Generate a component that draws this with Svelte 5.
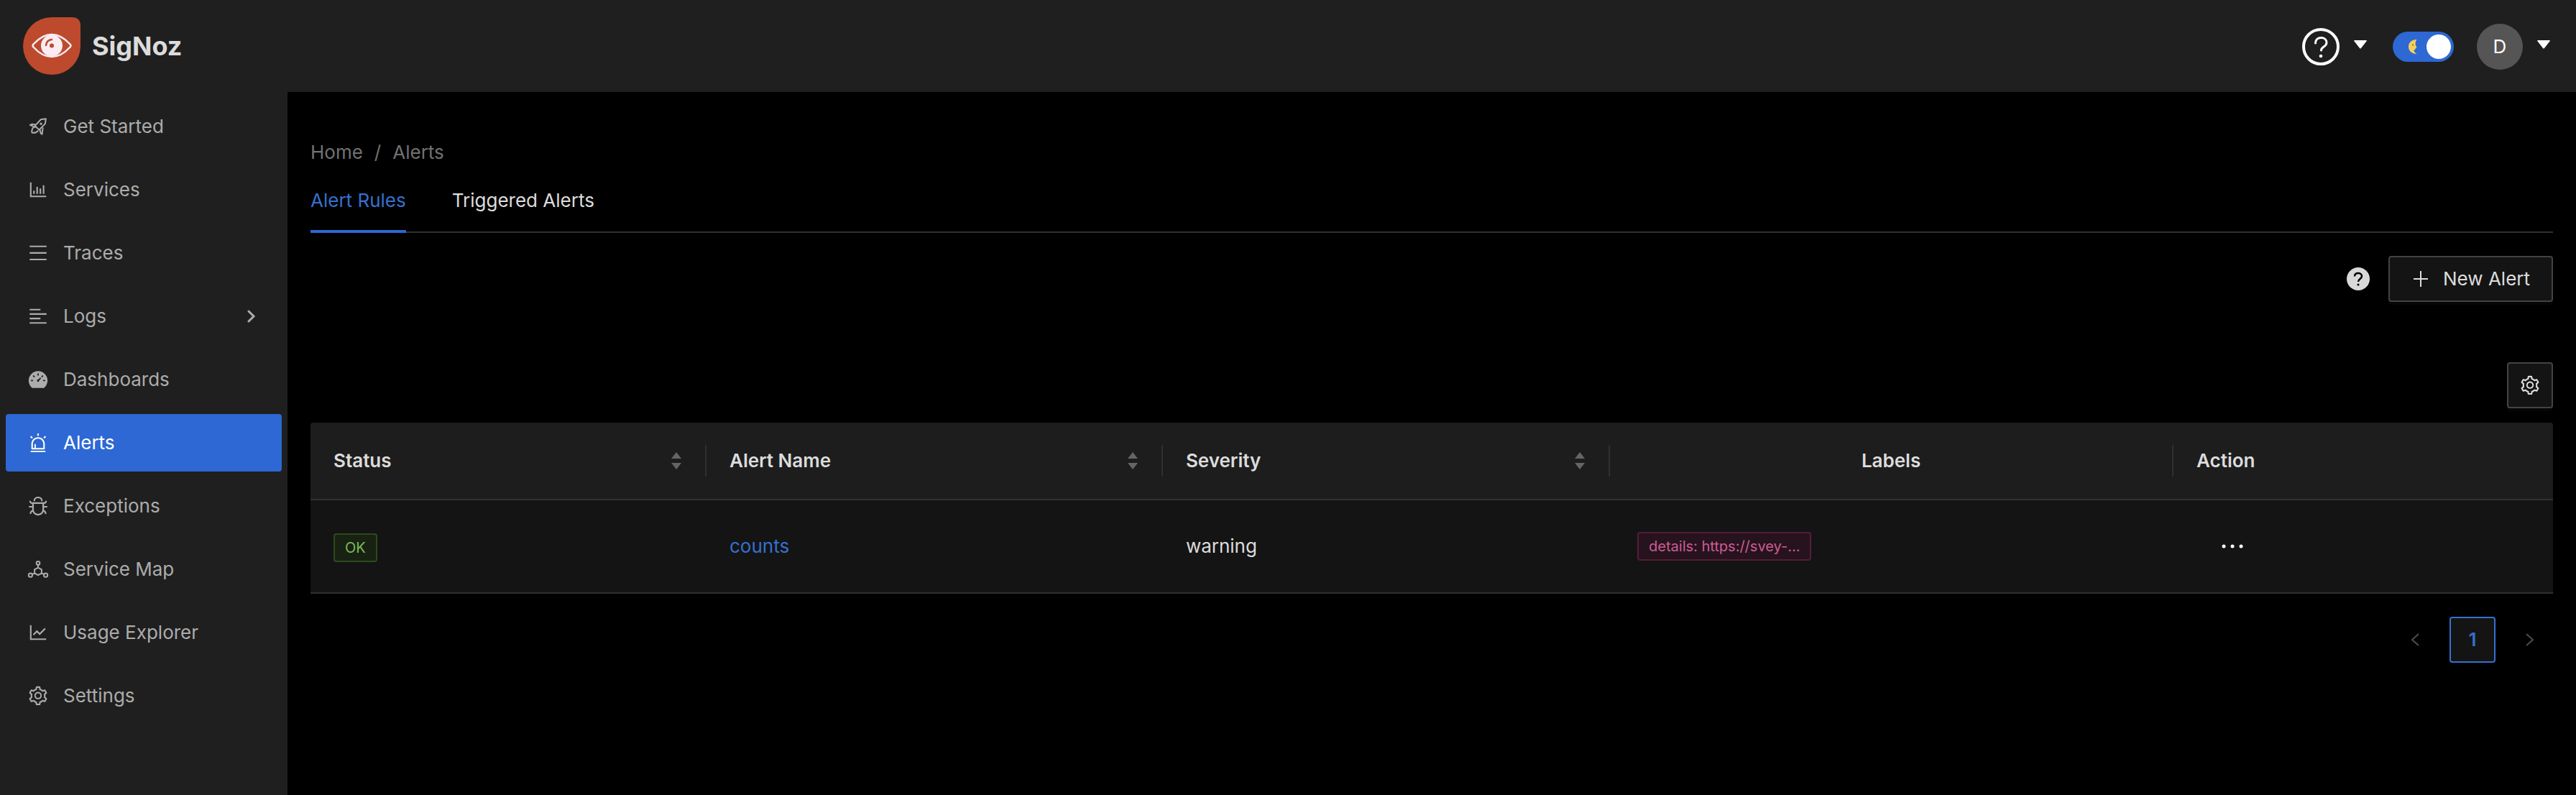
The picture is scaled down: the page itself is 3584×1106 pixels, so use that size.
<script>
  const setting = 'M924.8 625.7l-65.5-56c3.1-19 4.7-38.4 4.7-57.8s-1.6-38.8-4.7-57.8l65.5-56a32.03 32.03 0 009.3-35.2l-.9-2.6a443.74 443.74 0 00-79.7-137.9l-1.8-2.1a32.12 32.12 0 00-35.1-9.5l-81.3 28.9c-30-24.6-63.5-44-99.7-57.6l-15.7-85a32.05 32.05 0 00-25.8-25.7l-2.7-.5c-52.1-9.4-106.9-9.4-159 0l-2.7.5a32.05 32.05 0 00-25.8 25.7l-15.8 85.4a351.86 351.86 0 00-99 57.4l-81.9-29.1a32 32 0 00-35.1 9.5l-1.8 2.1a446.02 446.02 0 00-79.7 137.9l-.9 2.6c-4.5 12.5-.8 26.5 9.3 35.2l66.3 56.6c-3.1 18.8-4.6 38-4.6 57.1 0 19.2 1.5 38.4 4.6 57.1L99 625.5a32.03 32.03 0 00-9.3 35.2l.9 2.6c18.1 50.4 44.9 96.9 79.7 137.9l1.8 2.1a32.12 32.12 0 0035.1 9.5l81.9-29.1c29.8 24.5 63.1 43.9 99 57.4l15.8 85.4a32.05 32.05 0 0025.8 25.7l2.7.5a449.4 449.4 0 00159 0l2.7-.5a32.05 32.05 0 0025.8-25.7l15.7-85a350 350 0 0099.7-57.6l81.3 28.9a32 32 0 0035.1-9.5l1.8-2.1c34.8-41.1 61.6-87.5 79.7-137.9l.9-2.6c4.5-12.3.8-26.3-9.3-35zM788.3 465.9c2.5 15.1 3.8 30.6 3.8 46.1s-1.3 31-3.8 46.1l-6.6 40.1 74.7 63.9a370.03 370.03 0 01-42.6 73.6L721 702.8l-31.4 25.8c-23.9 19.6-50.5 35-79.3 45.8l-38.1 14.3-17.9 97a377.5 377.5 0 01-85 0l-17.9-97.2-37.8-14.5c-28.5-10.8-55-26.2-78.7-45.7l-31.4-25.9-93.4 33.2c-17-22.9-31.2-47.6-42.6-73.6l75.5-64.5-6.5-40c-2.4-14.9-3.7-30.3-3.7-45.5 0-15.3 1.2-30.6 3.7-45.5l6.5-40-75.5-64.5c11.3-26.1 25.6-50.7 42.6-73.6l93.4 33.2 31.4-25.9c23.7-19.5 50.2-34.9 78.7-45.7l37.9-14.3 17.9-97.2c28.1-3.2 56.8-3.2 85 0l17.9 97 38.1 14.3c28.7 10.8 55.4 26.2 79.3 45.8l31.4 25.8 92.8-32.9c17 22.9 31.2 47.6 42.6 73.6L781.8 426l6.5 39.9zM512 326c-97.2 0-176 78.8-176 176s78.8 176 176 176 176-78.8 176-176-78.8-176-176-176zm79.2 255.2A111.6 111.6 0 01512 614c-29.9 0-58-11.7-79.2-32.8A111.6 111.6 0 01400 502c0-29.9 11.7-58 32.8-79.2C454 401.6 482.1 390 512 390c29.9 0 58 11.6 79.2 32.8A111.6 111.6 0 01624 502c0 29.9-11.7 58-32.8 79.2z';
  const axes = 'M888 792H200V168c0-4.4-3.6-8-8-8h-56c-4.4 0-8 3.6-8 8v688c0 4.4 3.6 8 8 8h752c4.4 0 8-3.6 8-8v-56c0-4.4-3.6-8-8-8z';

  const items = [
    { label: 'Get Started', kind: 'rocket' },
    { label: 'Services', d: axes + 'M280 552h72v160h-72zM432 376h72v336h-72zM584 454h72v258h-72zM736 296h72v416h-72z' },
    { label: 'Traces', d: 'M112 160h800v72H112zM112 472h800v72H112zM112 784h800v72H112z' },
    { label: 'Logs', expand: true, d: 'M112 158h512v72H112zM112 370h800v72H112zM112 582h512v72H112zM112 794h800v72H112z' },
    { label: 'Dashboards', d: 'M924.8 385.6a446.7 446.7 0 00-96-142.4 446.7 446.7 0 00-142.4-96C631.1 123.8 572.5 112 512 112s-119.1 11.8-174.4 35.2a446.7 446.7 0 00-142.4 96 446.7 446.7 0 00-96 142.4C75.8 440.9 64 499.5 64 560c0 132.7 58.3 257.7 159.9 343.1l1.7 1.4c5.8 4.8 13.1 7.5 20.6 7.5h531.7c7.5 0 14.8-2.7 20.6-7.5l1.7-1.4C901.7 817.7 960 692.7 960 560c0-60.5-11.9-119.1-35.2-174.4zM482 232c0-4.4 3.6-8 8-8h44c4.4 0 8 3.6 8 8v80c0 4.4-3.6 8-8 8h-44c-4.4 0-8-3.6-8-8v-80zM270 582c0 4.4-3.6 8-8 8h-80c-4.4 0-8-3.6-8-8v-44c0-4.4 3.6-8 8-8h80c4.4 0 8 3.6 8 8v44zm90.7-204.5l-31.1 31.1a8.03 8.03 0 01-11.3 0L261.7 352a8.03 8.03 0 010-11.3l31.1-31.1c3.1-3.1 8.2-3.1 11.3 0l56.6 56.6c3.1 3.1 3.1 8.2 0 11.3zm291.1 83.6l-84.5 84.5c5 18.7.2 39.4-14.5 54.1a55.95 55.95 0 01-79.2 0 55.95 55.95 0 010-79.2 55.87 55.87 0 0154.1-14.5l84.5-84.5c3.1-3.1 8.2-3.1 11.3 0l28.3 28.3c3.1 3.1 3.1 8.1 0 11.3zm43-52.4l-31.1-31.1a8.03 8.03 0 010-11.3l56.6-56.6c3.1-3.1 8.2-3.1 11.3 0l31.1 31.1c3.1 3.1 3.1 8.2 0 11.3l-56.6 56.6a8.03 8.03 0 01-11.3 0zM846 582c0 4.4-3.6 8-8 8h-80c-4.4 0-8-3.6-8-8v-44c0-4.4 3.6-8 8-8h80c4.4 0 8 3.6 8 8v44z' },
    { label: 'Alerts', active: true, d: 'M193 796c0 17.7 14.3 32 32 32h574c17.7 0 32-14.3 32-32V563c0-176.2-142.8-319-319-319S193 386.8 193 563v233zm72-233c0-136.4 110.6-247 247-247s247 110.6 247 247v193H404V585c0-5.5-4.5-10-10-10h-44c-5.5 0-10 4.5-10 10v171h-75V563zm-48.1-252.5l39.6-39.6c3.1-3.1 3.1-8.2 0-11.3l-67.9-67.9a8.03 8.03 0 00-11.3 0l-39.6 39.6a8.03 8.03 0 000 11.3l67.9 67.9c3.1 3.1 8.1 3.1 11.3 0zm669.6-79.2l-39.6-39.6a8.03 8.03 0 00-11.3 0l-67.9 67.9a8.03 8.03 0 000 11.3l39.6 39.6c3.1 3.1 8.2 3.1 11.3 0l67.9-67.9c3.1-3.2 3.1-8.2 0-11.3zM832 892H192c-17.7 0-32 14.3-32 32v24c0 4.4 3.6 8 8 8h688c4.4 0 8-3.6 8-8v-24c0-17.7-14.3-32-32-32zM484 180h56c4.4 0 8-3.6 8-8V76c0-4.4-3.6-8-8-8h-56c-4.4 0-8 3.6-8 8v96c0 4.4 3.6 8 8 8z' },
    { label: 'Exceptions', d: 'M304 280h56c4.4 0 8-3.6 8-8 0-28.3 5.9-53.2 17.1-73.5 10.6-19.4 26-34.8 45.4-45.4C450.9 142 475.7 136 504 136h16c28.3 0 53.2 5.9 73.5 17.1 19.4 10.6 34.8 26 45.4 45.4C650 218.9 656 243.7 656 272c0 4.4 3.6 8 8 8h56c4.4 0 8-3.6 8-8 0-40-8.8-76.7-25.9-108.1a184.31 184.31 0 00-74-74C596.7 72.8 560 64 520 64h-16c-40 0-76.7 8.8-108.1 25.9a184.31 184.31 0 00-74 74C304.8 195.3 296 232 296 272c0 4.4 3.6 8 8 8zM940 512H792V412c76.8 0 139-62.2 139-139 0-4.4-3.6-8-8-8h-60c-4.4 0-8 3.6-8 8a63 63 0 01-63 63H232a63 63 0 01-63-63c0-4.4-3.6-8-8-8h-60c-4.4 0-8 3.6-8 8 0 76.8 62.2 139 139 139v100H84c-4.4 0-8 3.6-8 8v56c0 4.4 3.6 8 8 8h148v96c0 6.5.2 13 .7 19.3C164.1 728.6 116 796.7 116 876c0 4.4 3.6 8 8 8h56c4.4 0 8-3.6 8-8 0-44.2 23.9-82.9 59.6-103.7a273 273 0 0022.7 49c24.3 41.5 59 76.2 100.5 100.5S460.5 960 512 960s99.8-13.9 141.3-38.2a281.38 281.38 0 00123.2-149.5A120 120 0 01836 876c0 4.4 3.6 8 8 8h56c4.4 0 8-3.6 8-8 0-79.3-48.1-147.4-116.7-176.7.4-6.4.7-12.8.7-19.3v-96h148c4.4 0 8-3.6 8-8v-56c0-4.4-3.6-8-8-8zM716 680c0 36.8-9.7 72-27.8 102.9-17.7 30.3-43 55.6-73.3 73.3C584 874.3 548.8 884 512 884s-72-9.7-102.9-27.8c-30.3-17.7-55.6-43-73.3-73.3A202.75 202.75 0 01308 680V412h408v268z' },
    { label: 'Service Map', kind: 'map' },
    { label: 'Usage Explorer', d: axes + 'M305.8 637.7c3.1 3.1 8.1 3.1 11.3 0l138.3-137.6L583 628.5c3.1 3.1 8.2 3.1 11.3 0l275.4-275.3c3.1-3.1 3.1-8.2 0-11.3l-39.6-39.6a8.03 8.03 0 00-11.3 0l-230 229.9L461.4 404a8.03 8.03 0 00-11.3 0L266.3 586.7a8.03 8.03 0 000 11.3l39.5 39.7z' },
    { label: 'Settings', d: setting },
  ];

  let dark = $state(true);
</script>

{#snippet caret()}
  <svg class="caret" viewBox="0 0 18 12" aria-hidden="true"><path d="M1 0h16q1.500 0 .6 1.200L10 11q-1 1-2 0L.4 1.200Q-.5 0 1 0z" /></svg>
{/snippet}

{#snippet sorter()}
  <button class="sorter" aria-label="Sort">
    <svg viewBox="0 0 16 24" aria-hidden="true"><path d="M8 0l7 9H1zM8 24l7-9H1z" /></svg>
  </button>
{/snippet}

<div class="app">
  <header>
    <a class="brand" href="#home">
      <svg class="logo" viewBox="0 0 80 80" aria-hidden="true">
        <path fill="#bd4a2d" d="M40 0h28q12 0 12 12v27a40 40 0 1 1-40-39z" />
        <path fill="none" stroke="#f9ecf3" stroke-width="2.500" stroke-linejoin="round" d="M15 37Q27 24 40 24T65 37q3 2.500 0 5Q53 55 40 55T15 42q-3-2.500 0-5z" />
        <circle cx="40" cy="39.500" r="15" fill="#f9ecf3" />
        <circle cx="40" cy="39.500" r="3" fill="#bd4a2d" />
        <path fill="none" stroke="#bd4a2d" stroke-width="2.500" stroke-linecap="round" d="M32 39q.5-7 8-8" />
      </svg>
      <span>SigNoz</span>
    </a>
    <div class="tools">
      <button class="menu" aria-label="Help">
        <svg class="help" viewBox="0 0 52 52" aria-hidden="true">
          <circle cx="26" cy="26" r="24" fill="none" stroke="#fff" stroke-width="4" />
          <path fill="none" stroke="#fff" stroke-width="3" stroke-linecap="round" d="M18.500 21c0-5 3.500-7.500 7.800-7.500 4.500 0 7.700 2.800 7.700 6.800 0 6-7.500 5.500-7.500 10.700" />
          <circle cx="26" cy="39" r="2.300" />
        </svg>
        {@render caret()}
      </button>
      <label class="switch">
        <input type="checkbox" role="switch" aria-label="Dark mode" bind:checked={dark} />
        <svg class="moon" viewBox="0 0 12 20" aria-hidden="true">
          <path fill="#f5cf5b" d="M11.500 0C4 0 0 4.500 0 10s4 10 11.500 10c-2.500-1.500-4-3.500-4-5.500l2-.8.3-1.500 1.600-1.400-1.700-3.200C9.400 4.500 10 1.800 11.500 0z" />
          <circle cx="6" cy="7.500" r="1" fill="#7a5a1c" />
        </svg>
        <span class="knob"></span>
      </label>
      <button class="menu" aria-label="Account">
        <span class="avatar">D</span>
        {@render caret()}
      </button>
    </div>
  </header>

  <div class="body">
    <nav aria-label="Main">
      {#each items as item}
        <a href="#{item.label}" class:active={item.active} aria-current={item.active ? 'page' : undefined}>
          <svg class="icon" viewBox="0 0 1024 1024" aria-hidden="true">
            {#if item.kind === 'rocket'}
              <g fill="none" stroke="currentColor" stroke-width="68" stroke-linejoin="round">
                <path d="M880 144L640 180 360 480 560 670 850 380z" />
                <path d="M400 430L230 400 130 440 400 560M590 640L640 840 700 880 740 560" />
                <path d="M330 510Q190 620 220 800 400 850 520 700" />
              </g>
              <circle cx="650" cy="380" r="55" />
            {:else if item.kind === 'map'}
              <g fill="none" stroke="currentColor" stroke-width="68">
                <circle cx="512" cy="220" r="80" />
                <circle cx="150" cy="790" r="88" />
                <circle cx="874" cy="790" r="88" />
                <path d="M512 300v130M512 430L680 525V695L512 792 344 695V525zM344 695L228 752M680 695L796 752" />
              </g>
            {:else}
              <path d={item.d} />
            {/if}
          </svg>
          <span>{item.label}</span>
          {#if item.expand}
            <svg class="chevron" viewBox="0 0 12 18" aria-hidden="true"><path d="M2 2l7 7-7 7" /></svg>
          {/if}
        </a>
      {/each}
    </nav>

    <main>
      <div class="crumbs">
        <a href="#home">Home</a><span>/</span><a href="#alerts">Alerts</a>
      </div>
      <div class="tabs" role="tablist">
        <button role="tab" class="selected" aria-selected="true">Alert Rules</button>
        <button role="tab" aria-selected="false">Triggered Alerts</button>
      </div>

      <div class="actions">
        <svg class="info" viewBox="0 0 32 32" aria-hidden="true">
          <circle cx="16" cy="16" r="16" fill="#d9d9d9" />
          <path fill="none" stroke="#000" stroke-width="2.500" d="M11 12.500c0-3 2.300-4.500 5-4.500s5 1.600 5 4.300c0 3.700-5 3.700-5 7.700" />
          <circle cx="16" cy="24" r="1.600" fill="#000" />
        </svg>
        <button class="box new">
          <svg viewBox="0 0 22 22" aria-hidden="true"><path d="M11 0v22M1 11h20" /></svg>
          <span>New Alert</span>
        </button>
      </div>

      <div class="columns">
        <button class="box square" aria-label="Table settings">
          <svg class="icon" viewBox="0 0 1024 1024" aria-hidden="true"><path d={setting} /></svg>
        </button>
      </div>

      <table>
        <colgroup><col class="c1" /><col class="c2" /><col class="c3" /><col class="c4" /><col class="c5" /></colgroup>
        <thead>
          <tr>
            <th><div class="head"><span>Status</span>{@render sorter()}</div></th>
            <th><div class="head"><span>Alert Name</span>{@render sorter()}</div></th>
            <th><div class="head"><span>Severity</span>{@render sorter()}</div></th>
            <th><div class="head center"><span>Labels</span></div></th>
            <th><div class="head last"><span>Action</span></div></th>
          </tr>
        </thead>
        <tbody>
          <tr>
            <td><span class="tag ok">OK</span></td>
            <td><a href="#counts">counts</a></td>
            <td>warning</td>
            <td class="labels"><div class="tags"><span class="tag pink">details: https://svey-...</span></div></td>
            <td>
              <button class="more" aria-label="More actions">
                <svg viewBox="0 0 30 6" aria-hidden="true"><circle cx="3" cy="3" r="2.500" /><circle cx="15" cy="3" r="2.500" /><circle cx="27" cy="3" r="2.500" /></svg>
              </button>
            </td>
          </tr>
        </tbody>
      </table>

      <div class="pages">
        <button class="arrow" aria-label="Previous page" disabled><svg viewBox="0 0 12 18" aria-hidden="true"><path d="M11 1L2 9l9 8" /></svg></button>
        <button class="page">1</button>
        <button class="arrow" aria-label="Next page" disabled><svg viewBox="0 0 12 18" aria-hidden="true"><path d="M1 1l9 8-9 8" /></svg></button>
      </div>
    </main>
  </div>
</div>

<style>
  :global(body) { background: #000; }
  .app {
    display: flex;
    flex-direction: column;
    min-height: 100vh;
    font: 400 26px/44px Inter, sans-serif;
    color: #dcdcdc;
  }
  .app * { box-sizing: border-box; }
  button { font: inherit; color: inherit; background: none; border: 0; padding: 0; cursor: pointer; }
  a { color: inherit; text-decoration: none; }
  svg { display: block; flex: none; fill: currentColor; }

  header {
    display: flex;
    align-items: center;
    justify-content: space-between;
    height: 128px;
    padding: 0 36px 0 32px;
    background: #1f1f1f;
  }
  .brand { display: flex; align-items: center; gap: 16px; font-size: 36px; font-weight: 700; }
  .logo { width: 80px; height: 80px; }
  .tools { display: flex; align-items: center; padding-top: 2px; }
  .menu { display: flex; align-items: center; gap: 20px; color: #fff; }
  .help { width: 52px; height: 52px; }
  .caret { width: 18px; height: 12px; margin-bottom: 6px; }
  .switch { position: relative; display: flex; align-items: center; justify-content: space-between; width: 85px; height: 42px; margin: 0 32px 0 36px; padding: 0 4px 0 22px; border-radius: 21px; background: #2d68d4; }
  .switch input { position: absolute; inset: 0; margin: 0; opacity: 0; }
  .moon { width: 12px; height: 20px; }
  .knob { width: 34px; height: 34px; border-radius: 50%; background: #fff; }
  .avatar { width: 64px; height: 64px; border-radius: 50%; background: #555; line-height: 64px; }

  .body { display: flex; flex: 1; }
  nav { width: 400px; flex: none; padding: 8px; background: #1f1f1f; display: flex; flex-direction: column; gap: 8px; color: #acacac; }
  nav a { display: flex; align-items: center; gap: 20px; height: 80px; padding: 0 36px 0 30px; border-radius: 4px; }
  nav a.active { background: #2d68d4; color: #fff; }
  .icon { width: 30px; height: 30px; }
  .chevron { width: 12px; height: 18px; margin-left: auto; }
  .chevron path { fill: none; stroke: currentColor; stroke-width: 3; stroke-linecap: round; }

  main { flex: 1; min-width: 0; padding: 62px 32px 0; }
  .crumbs { display: flex; gap: 16px; color: #727272; }
  .tabs { display: flex; gap: 64px; margin-top: 12px; height: 78px; border-bottom: 2px solid #303030; }
  .tabs button { height: 78px; padding-bottom: 8px; border-bottom: 4px solid transparent; }
  .tabs .selected { color: #3570cf; border-color: #2d68d4; }
  .actions { display: flex; justify-content: flex-end; align-items: center; gap: 26px; margin-top: 32px; }
  .info { width: 32px; height: 32px; }
  .box { display: flex; align-items: center; justify-content: center; height: 64px; border: 2px solid #434343; border-radius: 4px; background: #141414; box-shadow: 0 4px 0 #060606; }
  .new { gap: 20px; padding: 0 30px 0 32px; }
  .new svg { width: 22px; height: 22px; stroke: currentColor; stroke-width: 2; }
  .columns { display: flex; justify-content: flex-end; margin: 84px 0 20px; }
  .square { width: 64px; }

  table { width: 100%; table-layout: fixed; border-collapse: separate; border-spacing: 0; border-radius: 4px 4px 0 0; overflow: hidden; background: #141414; }
  .c1 { width: 17.66%; } .c2 { width: 20.35%; } .c3 { width: 19.94%; } .c4 { width: 25.13%; }
  th { height: 108px; padding: 0; background: #1d1d1d; border-bottom: 2px solid #303030; font-weight: 600; }
  .head { display: flex; align-items: center; justify-content: space-between; height: 44px; padding: 0 32px; border-right: 2px solid #303030; }
  .head.center { justify-content: center; }
  .head.last { border-right: 0; }
  .sorter { color: #656565; }
  .sorter svg { width: 16px; height: 24px; }
  td { height: 130px; padding: 0 32px; border-bottom: 2px solid #303030; }
  td a { color: #3570cf; }
  .tags { display: flex; }
  .tag { display: inline-block; height: 40px; padding: 0 14px; border: 2px solid; border-radius: 4px; font-size: 20px; line-height: 36px; vertical-align: middle; }
  .ok { color: #7db85b; background: #182212; border-color: #2c4a1b; }
  .pink { color: #cb5d96; background: #27131d; border-color: #551c3b; }
  td.labels { padding-left: 38px; }
  .more { display: flex; align-items: center; justify-content: center; width: 100px; height: 44px; color: #fff; }
  .more svg { width: 30px; height: 6px; }

  .pages { display: flex; justify-content: flex-end; gap: 16px; margin-top: 32px; }
  .pages button { width: 64px; height: 64px; display: flex; align-items: center; justify-content: center; }
  .arrow svg { width: 12px; height: 18px; fill: none; stroke: #4d4d4d; stroke-width: 2; }
  .page { color: #3570cf; font-weight: 600; background: #141414; border: 2px solid #3570cf; border-radius: 4px; }
</style>
